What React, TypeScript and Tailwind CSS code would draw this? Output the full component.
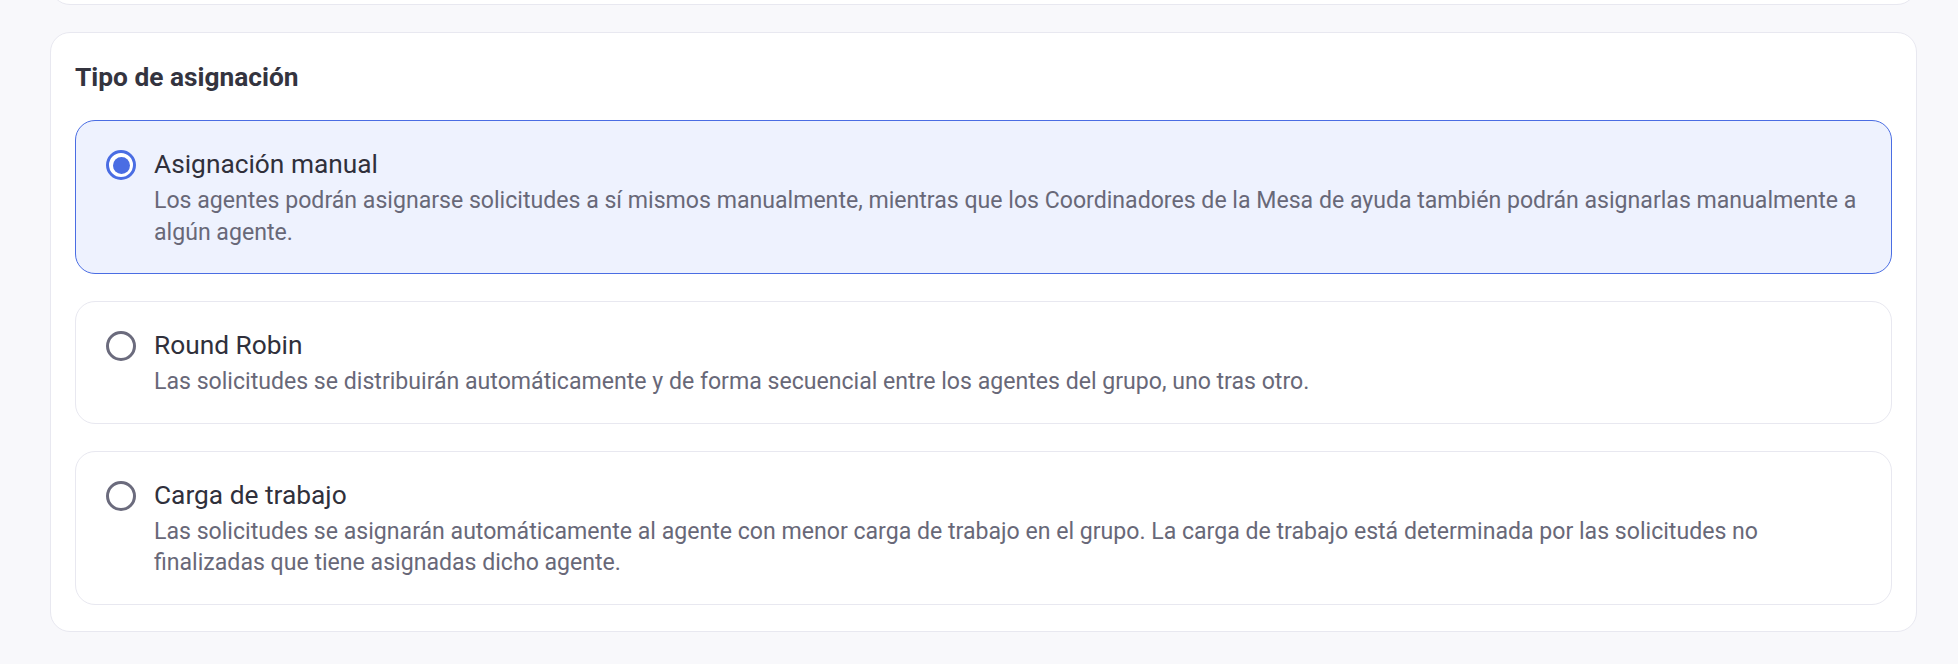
import React from "react";

type Option = {
  title: string;
  desc: string;
  selected?: boolean;
};

const options: Option[] = [
  {
    title: "Asignación manual",
    desc: "Los agentes podrán asignarse solicitudes a sí mismos manualmente, mientras que los Coordinadores de la Mesa de ayuda también podrán asignarlas manualmente a algún agente.",
    selected: true,
  },
  {
    title: "Round Robin",
    desc: "Las solicitudes se distribuirán automáticamente y de forma secuencial entre los agentes del grupo, uno tras otro.",
  },
  {
    title: "Carga de trabajo",
    desc: "Las solicitudes se asignarán automáticamente al agente con menor carga de trabajo en el grupo. La carga de trabajo está determinada por las solicitudes no finalizadas que tiene asignadas dicho agente.",
  },
];

function Radio({ selected }: { selected?: boolean }) {
  if (selected) {
    return (
      <div className="mt-[6px] flex h-[30px] w-[30px] shrink-0 items-center justify-center rounded-full border-[3px] border-[#4a6de3] bg-white">
        <div className="h-[17px] w-[17px] rounded-full bg-[#4a6de3]" />
      </div>
    );
  }
  return (
    <div className="mt-[6px] h-[30px] w-[30px] shrink-0 rounded-full border-[3px] border-[#6b6b7d] bg-white" />
  );
}

function OptionCard({ opt }: { opt: Option }) {
  return (
    <div
      className={
        opt.selected
          ? "flex gap-[18px] rounded-[20px] border border-[#4a6de3] bg-[#eef2fe] pl-[30px] pr-[30px] pt-[23px] pb-[25px]"
          : "flex gap-[18px] rounded-[20px] border border-[#e8e8f0] bg-white pl-[30px] pr-[30px] pt-[23px] pb-[25px]"
      }
    >
      <Radio selected={opt.selected} />
      <div className="flex min-w-0 flex-1 flex-col">
        <div className="text-[26.3px] leading-[41px] text-[#30303b]">{opt.title}</div>
        <div className="text-[23.1px] leading-[31.5px] text-[#686878]">{opt.desc}</div>
      </div>
    </div>
  );
}

export default function App() {
  return (
    <div
      className="min-h-screen overflow-hidden bg-[#f8f8fb] pl-[50px] pr-[41px]"
      style={{ fontFamily: "Roboto, 'Noto Sans', sans-serif" }}
    >
      <div className="-mt-[55px] h-[60px] rounded-[20px] border border-[#e8e8f0] bg-white" />
      <div className="mt-[27px] rounded-[20px] border border-[#e8e8f0] bg-white px-[24px] pt-[25px] pb-[26px]">
        <h2 className="text-[26.3px] font-bold leading-[38px] text-[#34343f]">Tipo de asignación</h2>
        <div className="mt-[24px] flex flex-col gap-[27px]">
          {options.map((o) => (
            <OptionCard key={o.title} opt={o} />
          ))}
        </div>
      </div>
    </div>
  );
}
